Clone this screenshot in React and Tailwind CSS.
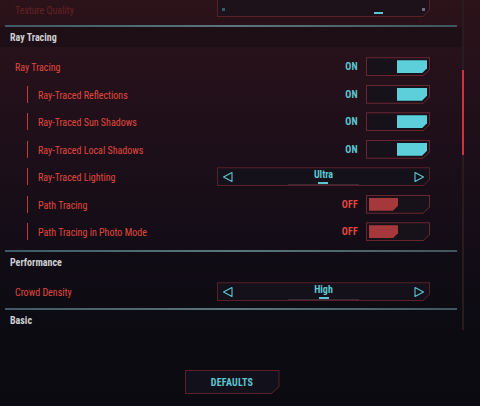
import React from "react";

const FONT = { fontFamily: '"Liberation Sans Narrow", "Roboto Condensed", Roboto, sans-serif' };

function Toggle({ on }) {
  return (
    <div className="flex items-center gap-[8px]">
      <span
        className={`text-[10px] font-bold tracking-wide ${on ? "text-[#5cc7d3]" : "text-[#e0483f]"}`}
      >
        {on ? "ON" : "OFF"}
      </span>
      <div className="w-[64px] h-[19px] p-px bg-[#6a2630] [clip-path:polygon(0_0,100%_0,100%_65%,calc(100%-7px)_100%,0_100%)]">
        <div className="w-full h-full flex p-[2px] bg-[#17121a] [clip-path:polygon(0_0,100%_0,100%_65%,calc(100%-6px)_100%,0_100%)]">
          {on ? (
            <>
              <div className="flex-1" />
              <div className="w-[30px] h-full bg-[#5ccfdb] [clip-path:polygon(0_0,100%_0,100%_60%,calc(100%-5px)_100%,0_100%)]" />
            </>
          ) : (
            <>
              <div className="w-[29px] h-full bg-[#a5383a] [clip-path:polygon(0_0,100%_0,100%_60%,calc(100%-5px)_100%,0_100%)]" />
              <div className="flex-1" />
            </>
          )}
        </div>
      </div>
    </div>
  );
}

function Arrow({ right }) {
  return (
    <svg width="12" height="12" viewBox="0 0 12 12" className="shrink-0">
      {right ? (
        <path d="M2 1.5 L10.5 6 L2 10.5 Z" fill="none" stroke="#5cc7d3" strokeWidth="1.1" strokeLinejoin="round" />
      ) : (
        <path d="M10 1.5 L1.5 6 L10 10.5 Z" fill="none" stroke="#5cc7d3" strokeWidth="1.1" strokeLinejoin="round" />
      )}
    </svg>
  );
}

function Selector({ value }) {
  return (
    <div className="w-[213px] h-[19px] p-px bg-[#5a2029] [clip-path:polygon(0_0,100%_0,100%_65%,calc(100%-7px)_100%,0_100%)]">
      <div className="relative w-full h-full flex items-center justify-between px-[4px] bg-[#15111a] [clip-path:polygon(0_0,100%_0,100%_65%,calc(100%-6px)_100%,0_100%)]">
        <Arrow />
        <div className="flex flex-col items-center">
          <span className="text-[10px] font-bold text-[#5cc7d3] leading-[12px]">{value}</span>
          <div className="w-[10px] h-[2px] bg-[#5cc7d3] mt-[1px]" />
        </div>
        <Arrow right />
        <div className="absolute bottom-0 left-[70px] right-[70px] h-px bg-[#3a2a33]" />
      </div>
    </div>
  );
}

function Row({ label, indent, children }) {
  return (
    <div className="h-[27.5px] flex items-center justify-between pr-[32px]">
      <div className="flex items-center h-full">
        {indent ? (
          <>
            <div className="ml-[27px] w-px h-[17px] bg-[#c23a3c]" />
            <span className="ml-[10px] mt-[2px] text-[10px] text-[#e0483f]">{label}</span>
          </>
        ) : (
          <span className="ml-[15px] mt-[2px] text-[10px] text-[#e0483f]">{label}</span>
        )}
      </div>
      {children}
    </div>
  );
}

function SectionLine() {
  return <div className="h-[2px] mx-[5px] bg-gradient-to-r from-[#3f5a62] via-[#5a767c] to-[#40565c]" />;
}

function Header({ title }) {
  return (
    <div className="h-[21px] flex items-center bg-[#0e0c13]/40">
      <span className="ml-[10px] mt-[1px] text-[10px] font-bold text-[#cfd0d3]">{title}</span>
    </div>
  );
}

export default function App() {
  return (
    <div
      className="relative w-[480px] h-[406px] overflow-hidden bg-[linear-gradient(180deg,#2c1219_0%,#22101a_25%,#150d17_55%,#0c0b12_80%,#0a0a10_100%)]"
      style={FONT}
    >
      <div className="flex">
        <div className="w-[462px] h-[330px] flex flex-col">
          {/* partially scrolled row */}
          <div className="h-[27px] flex justify-between pr-[32px]">
            <span className="ml-[15px] mt-[3px] text-[10px] text-[#e0483f] opacity-30">Texture Quality</span>
            <div className="-mt-[2px] w-[213px] h-[19px] p-px bg-[#5a2029] [clip-path:polygon(0_0,100%_0,100%_65%,calc(100%-7px)_100%,0_100%)]">
              <div className="w-full h-full flex items-end justify-between px-[4px] pb-[2px] bg-[#1d111a] [clip-path:polygon(0_0,100%_0,100%_65%,calc(100%-6px)_100%,0_100%)]">
                <div className="w-[3px] h-[3px] bg-[#5cc7d3]/40 mb-[3px]" />
                <div className="w-[9px] h-[2px] bg-[#5cc7d3] ml-[110px]" />
                <div className="w-[3px] h-[3px] bg-[#aab]/60 mb-[3px]" />
              </div>
            </div>
          </div>
          <SectionLine />
          <Header title="Ray Tracing" />
          <div className="pt-[6px]">
            <Row label="Ray Tracing">
              <Toggle on />
            </Row>
            <Row label="Ray-Traced Reflections" indent>
              <Toggle on />
            </Row>
            <Row label="Ray-Traced Sun Shadows" indent>
              <Toggle on />
            </Row>
            <Row label="Ray-Traced Local Shadows" indent>
              <Toggle on />
            </Row>
            <Row label="Ray-Traced Lighting" indent>
              <Selector value="Ultra" />
            </Row>
            <Row label="Path Tracing" indent>
              <Toggle />
            </Row>
            <Row label="Path Tracing in Photo Mode" indent>
              <Toggle />
            </Row>
          </div>
          <div className="h-[5px]" />
          <SectionLine />
          <Header title="Performance" />
          <div className="pt-[6px]">
            <Row label="Crowd Density">
              <Selector value="High" />
            </Row>
          </div>
          <div className="h-[3px]" />
          <SectionLine />
          <Header title="Basic" />
        </div>
        {/* scrollbar */}
        <div className="relative w-[2px] h-[330px] bg-[#2a1a22]">
          <div className="absolute left-0 top-[70px] w-[2px] h-[85px] bg-[#c8343f]" />
        </div>
      </div>
      <div className="flex justify-center mt-[40px] pr-[16px]">
        <div className="w-[95px] h-[24px] p-px bg-[#5a2029] [clip-path:polygon(0_0,100%_0,100%_70%,calc(100%-8px)_100%,0_100%)]">
          <div className="w-full h-full flex items-center justify-center bg-[#12101a] [clip-path:polygon(0_0,100%_0,100%_70%,calc(100%-7px)_100%,0_100%)]">
            <span className="text-[10px] font-bold tracking-wide text-[#5cc7d3]">DEFAULTS</span>
          </div>
        </div>
      </div>
    </div>
  );
}
